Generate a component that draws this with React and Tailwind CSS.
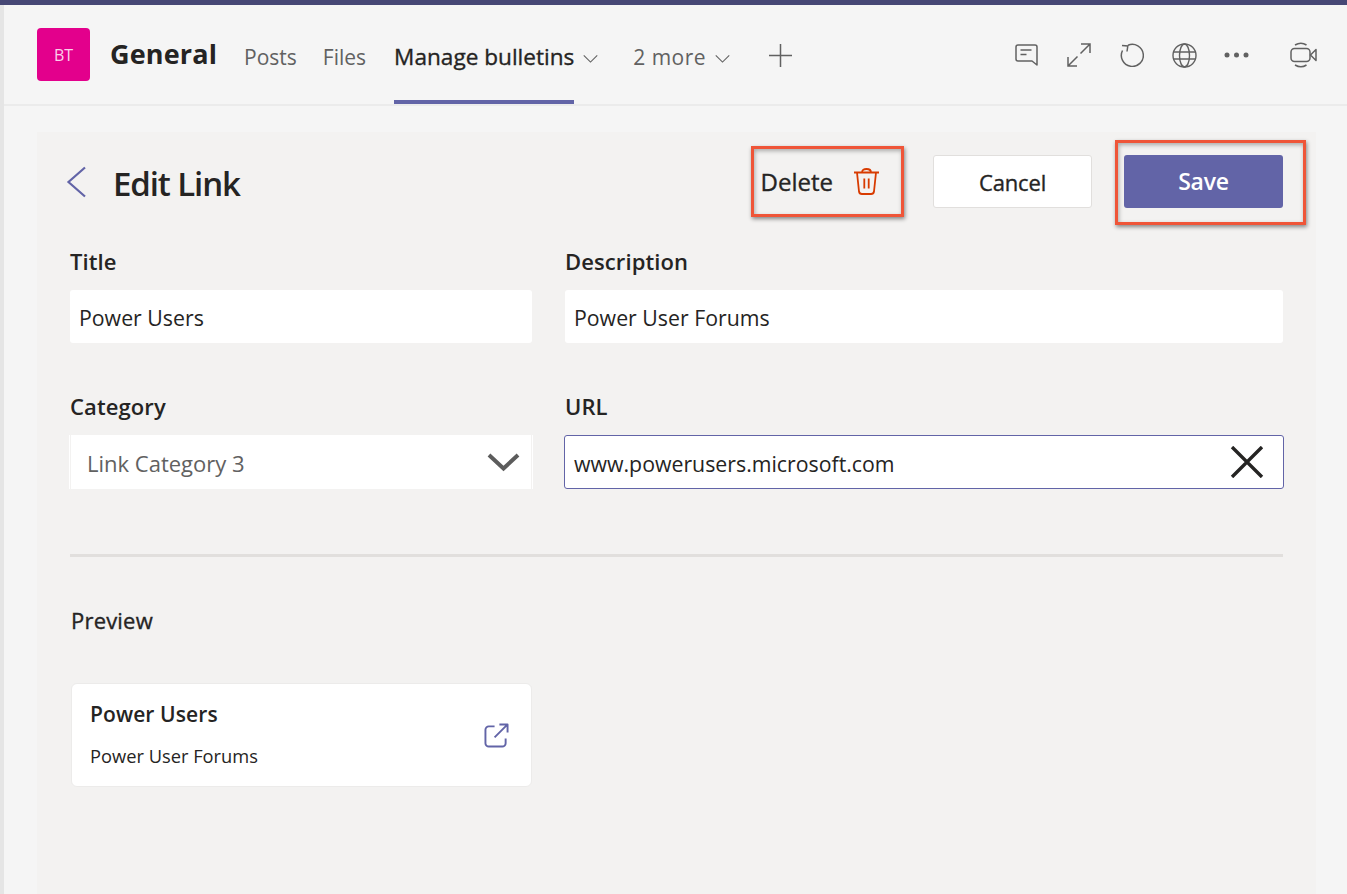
const font = { fontFamily: '"Open Sans","Noto Sans",sans-serif' };

function Chevron({ className }) {
  return (
    <svg className={className} viewBox="0 0 17 10" fill="none" stroke="currentColor" strokeWidth="1.2">
      <path d="M1 1.5 8.5 9 16 1.5" />
    </svg>
  );
}

function Label({ children }) {
  return <div className="h-[30px] text-[22px] font-semibold leading-[28px] tracking-[0.1px] text-[#252423]">{children}</div>;
}

function Annotation({ className }) {
  return <div className={`pointer-events-none absolute border-[3px] border-[#ef5538] shadow-[1px_2px_4px_rgba(0,0,0,0.45),inset_1px_2px_4px_rgba(0,0,0,0.3)] ${className}`} />;
}

export default function App() {
  return (
    <div style={font} className="relative flex h-[894px] w-[1347px] flex-col overflow-hidden bg-[#f5f5f5]">
      <div className="h-[5px] shrink-0 bg-[#464775]" />
      <div className="flex min-h-0 flex-1 flex-col border-l-4 border-[#e5e5e5]">
        <header className="flex h-[101px] shrink-0 items-stretch border-b-2 border-[#ebebeb] pl-[33px]">
          <div className="mt-[23px] flex h-[53px] w-[53px] items-center justify-center rounded-[4px] bg-[#e3008c] text-[16px] text-[#fbd0ea]">BT</div>
          <div className="ml-[20px] mt-[30px] text-[27px] font-bold leading-[38px] tracking-[0.15px] text-[#252423]">General</div>
          <div className="ml-[27px] mt-[36px] text-[21px] leading-[32px] text-[#616161]">Posts</div>
          <div className="ml-[26px] mt-[36px] text-[21px] leading-[32px] text-[#616161]">Files</div>
          <div className="ml-[28px] flex items-start">
            <div className="flex h-[99px] flex-col border-b-4 border-[#6264a7]">
              <div className="mt-[36px] text-[22.600px] leading-[32px] text-[#252423] [-webkit-text-stroke:0.35px_#252423]">Manage bulletins</div>
            </div>
            <Chevron className="ml-[8px] mt-[49px] h-[9px] w-[17px] text-[#616161]" />
          </div>
          <div className="ml-[34px] mt-[36px] text-[21px] leading-[32px] tracking-[0.45px] text-[#616161]">2 more</div>
          <Chevron className="ml-[8px] mt-[49px] h-[9px] w-[17px] text-[#616161]" />
          <svg className="ml-[37px] mt-[38px] h-[25px] w-[25px] text-[#616161]" viewBox="0 0 25 25" stroke="currentColor" strokeWidth="1.5">
            <path d="M12.5 1v23M1 12.5h23" />
          </svg>
          <div className="ml-auto mr-[30px] mt-[37px] flex h-[26px] items-center text-[#616161]">
            <svg className="h-[22px] w-[23px]" viewBox="0 0 23 22" fill="none" stroke="currentColor" strokeWidth="1.5">
              <path d="M3 1h17a2 2 0 0 1 2 2v18l-5-4H3a2 2 0 0 1-2-2V3a2 2 0 0 1 2-2ZM5.500 6h11M5.500 10.500h6" strokeLinejoin="round" />
            </svg>
            <svg className="ml-[29px] h-[24px] w-[24px]" viewBox="0 0 24 24" fill="none" stroke="currentColor" strokeWidth="1.5">
              <path d="M14 1h9v9M23 1 13.500 10.500M10 23H1v-9M1 23l9.500-9.500" />
            </svg>
            <svg className="ml-[29px] h-[24px] w-[24px]" viewBox="0 0 24 24" fill="none" stroke="currentColor" strokeWidth="1.5">
              <path d="M8 2.300A11 11 0 1 1 2.500 7.500M2 2.500 7.800 3 7 8.500" />
            </svg>
            <svg className="ml-[28px] h-[25px] w-[25px]" viewBox="0 0 25 25" fill="none" stroke="currentColor" strokeWidth="1.4">
              <circle cx="12.500" cy="12.500" r="11.500" />
              <ellipse cx="12.500" cy="12.500" rx="5" ry="11.500" />
              <path d="M1.500 9h22M1.500 16h22" />
            </svg>
            <svg className="ml-[27px] h-[6px] w-[25px]" viewBox="0 0 25 6" fill="currentColor">
              <circle cx="3" cy="3" r="2.500" /><circle cx="12.500" cy="3" r="2.500" /><circle cx="22" cy="3" r="2.500" />
            </svg>
            <svg className="ml-[41px] h-[26px] w-[27px]" viewBox="0 0 27 26" fill="none" stroke="currentColor" strokeWidth="1.5">
              <rect x="1" y="6.500" width="19" height="13" rx="3.500" />
              <path d="M26 7.500 20.500 13 26 18.500ZM5 3Q11 -0.500 16.500 3M5 23Q11 26.500 16.500 23" strokeLinejoin="round" />
            </svg>
          </div>
        </header>

        <main className="ml-[33px] mt-[26px] min-h-0 w-[1279px] flex-1 bg-[#f3f2f1] px-[33px] pt-[23px]">
          <div className="flex h-[53px] items-center">
            <svg className="-ml-[4px] h-[32px] w-[20px] text-[#6264a7]" viewBox="0 0 20 32" fill="none" stroke="currentColor" strokeWidth="2.2">
              <path d="M19 1.500 2.500 16 19 30.500" />
            </svg>
            <h1 className="ml-[27px] mt-[5px] text-[33px] font-semibold leading-[44px] tracking-[-1.100px] text-[#252423]">Edit Link</h1>
            <div className="ml-auto flex items-center">
              <span className="text-[24px] leading-[32px] text-[#252423] [-webkit-text-stroke:0.35px_#252423]">Delete</span>
              <svg className="ml-[21px] h-[27px] w-[25px] text-[#d83b01]" viewBox="0 0 25 27" fill="none" stroke="currentColor" strokeWidth="1.8">
                <path d="M0 4.500H25M8 4.500C8 2 10 1 12.500 1S17 2 17 4.500M3 4.500 5 23.500a3 3 0 0 0 3 2.500h9a3 3 0 0 0 3-2.500L22 4.500M10.300 10.500v10M14.700 10.500v10" />
              </svg>
              <button className="ml-[54px] flex h-[53px] w-[159px] items-center justify-center rounded-[3px] border border-[#e1dfdd] bg-white text-[22px] leading-[30px] tracking-[-0.15px] text-[#252423] [-webkit-text-stroke:0.35px_#252423]">
                <span className="mt-[1px]">Cancel</span>
              </button>
              <button className="ml-[32px] flex h-[53px] w-[159px] items-center justify-center rounded-[3px] bg-[#6264a7] text-[23px] font-semibold leading-[30px] tracking-[-0.2px] text-white">
                <span className="-mt-[1px]">Save</span>
              </button>
            </div>
          </div>

          <div className="mt-[39px] grid grid-cols-[462px_718px] gap-x-[33px] gap-y-[49px]">
            <div>
              <Label>Title</Label>
              <div className="mt-[13px] flex h-[53px] items-center rounded-[3px] bg-white pl-[9px] text-[21.300px] leading-[30px] text-[#252423]">
                <span className="mt-[3px]">Power Users</span>
              </div>
            </div>
            <div>
              <Label>Description</Label>
              <div className="mt-[13px] flex h-[53px] items-center rounded-[3px] bg-white pl-[9px] text-[21.300px] leading-[30px] text-[#252423]">
                <span className="mt-[3px]">Power User Forums</span>
              </div>
            </div>
            <div>
              <Label>Category</Label>
              <div className="-mx-px mt-[13px] flex h-[54px] items-center justify-between border-x border-white bg-white pl-[17px] pr-[12px] text-[22px] leading-[30px] text-[#616161] shadow-[inset_1px_0_0_#f3f2f1,inset_-1px_0_0_#f3f2f1]">
                <span className="mt-[1px]">Link Category 3</span>
                <svg className="h-[20px] w-[33px] text-[#5c5c5c]" viewBox="0 0 33 20" fill="none" stroke="currentColor" strokeWidth="4">
                  <path d="M2 3 16.500 16.500 31 3" />
                </svg>
              </div>
            </div>
            <div>
              <Label>URL</Label>
              <div className="-mx-px mt-[13px] flex h-[54px] items-center justify-between rounded-[3px] border border-[#6264a7] bg-white pl-[9px] pr-[19px] text-[21.300px] leading-[30px] text-[#252423]">
                <span className="mt-[3px]">www.powerusers.microsoft.com</span>
                <svg className="h-[32px] w-[34px] text-[#252423]" viewBox="0 0 34 32" fill="none" stroke="currentColor" strokeWidth="3.400">
                  <path d="M2 1 32 31M32 1 2 31" />
                </svg>
              </div>
            </div>
          </div>

          <div className="mt-[65px] h-[3px] w-[1213px] bg-[#e1dfdd]" />

          <div className="mt-[49px]">
            <div className="ml-px h-[30px] text-[22px] leading-[28px] tracking-[0.2px] text-[#252423] [-webkit-text-stroke:0.35px_#252423]">Preview</div>
            <div className="ml-px mt-[47px] flex h-[104px] w-[461px] justify-between rounded-[6px] border border-[#ecebea] bg-white pl-[18px] pr-[22px] pt-[15px]">
              <div>
                <div className="text-[21px] font-semibold leading-[30px] tracking-[0.1px] text-[#252423]">Power Users</div>
                <div className="mt-[14px] text-[18.300px] leading-[26px] text-[#252423]">Power User Forums</div>
              </div>
              <svg className="mt-[24px] h-[25px] w-[25px] text-[#6264a7]" viewBox="0 0 26 26" fill="none" stroke="currentColor" strokeWidth="2">
                <path d="M11 3.500H5A3.500 3.500 0 0 0 1.500 7v14A3.500 3.500 0 0 0 5 24.500h14a3.500 3.500 0 0 0 3.500-3.500v-5M16 1.500h8.500V10M24.500 1.500 11 15" strokeLinejoin="round" />
              </svg>
            </div>
          </div>
        </main>
      </div>

      <Annotation className="left-[751px] top-[146px] h-[71px] w-[153px]" />
      <Annotation className="left-[1115px] top-[140px] h-[85px] w-[191px]" />
    </div>
  );
}
